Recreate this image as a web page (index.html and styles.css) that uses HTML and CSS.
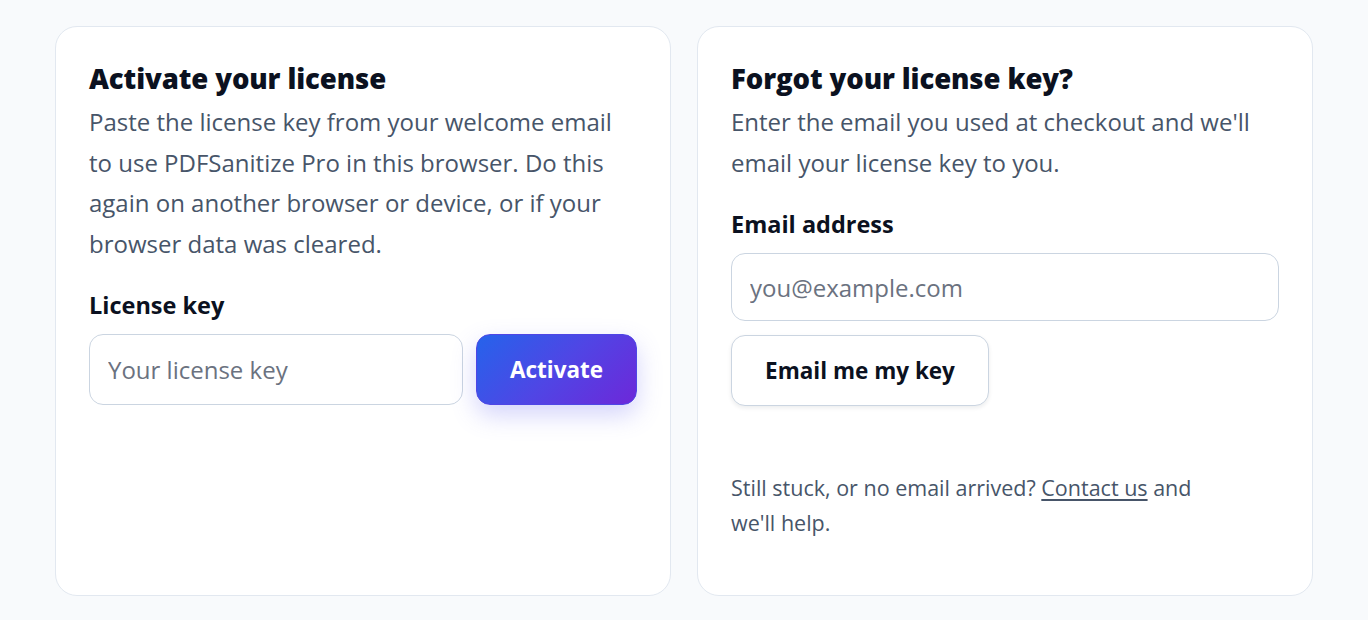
FILE: index.html
```html
<!DOCTYPE html>
<html lang="en">
<head>
<meta charset="utf-8">
<title>License</title>
<link rel="stylesheet" href="styles.css">
</head>
<body>
<main class="page">
  <section class="card">
    <h2 class="card-title">Activate your license</h2>
    <p class="card-text">Paste the license key from your welcome email to use PDFSanitize Pro in this browser. Do this again on another browser or device, or if your browser data was cleared.</p>
    <label class="field-label" for="key">License key</label>
    <div class="row row-key">
      <input id="key" class="input input-key" type="text" placeholder="Your license key">
      <button class="btn btn-primary" type="button">Activate</button>
    </div>
  </section>
  <section class="card">
    <h2 class="card-title">Forgot your license key?</h2>
    <p class="card-text">Enter the email you used at checkout and we'll email your license key to you.</p>
    <label class="field-label" for="email">Email address</label>
    <input id="email" class="input input-email" type="email" placeholder="you@example.com">
    <div class="row row-send">
      <button class="btn btn-secondary" type="button">Email me my key</button>
    </div>
    <p class="help">Still stuck, or no email arrived? <a href="#" class="help-link">Contact us</a> and we'll help.</p>
  </section>
</main>
</body>
</html>
```

FILE: styles.css
```css
* { box-sizing: border-box; }
html, body { margin: 0; padding: 0; }
body {
  background: #f8fafc;
  font-family: "Open Sans", "Noto Sans", sans-serif;
  color: #0f172a;
}
.page {
  display: grid;
  grid-template-columns: 616px 616px;
  gap: 26px;
  padding: 26px 55px 0;
}
.card {
  background: #ffffff;
  border: 1px solid #e2e8f0;
  border-radius: 22px;
  height: 570px;
  padding: 33px 33px;
  display: flex;
  flex-direction: column;
  align-items: flex-start;
}
.card-title {
  margin: 0;
  font-size: 27.5px;
  font-weight: 800;
  line-height: 38px;
  letter-spacing: -0.1px;
  color: #0b1120;
}
.card-text {
  margin: 4px 0 0;
  font-size: 24px;
  line-height: 40.5px;
  color: #475569;
}
.field-label {
  margin-top: 25px;
  font-size: 23.5px;
  font-weight: 700;
  line-height: 32px;
  color: #0b1120;
}
.row {
  display: flex;
  gap: 13px;
}
.row-key { margin-top: 13px; }
.row-send { margin-top: 14px; }
.input {
  font-family: inherit;
  font-size: 24px;
  color: #0f172a;
  background: #ffffff;
  border: 1px solid #cbd5e1;
  border-radius: 14px;
  padding: 0 18px;
  outline: none;
}
.input::placeholder { color: #6b7280; }
.input-key { width: 374px; height: 71px; }
.input-email { width: 548px; height: 68px; margin-top: 13px; }
.btn {
  font-family: inherit;
  font-size: 22.5px;
  font-weight: 700;
  border-radius: 14px;
  cursor: pointer;
  padding: 0;
}
.btn-primary {
  width: 161px;
  height: 71px;
  color: #ffffff;
  border: 1px solid #4f46e5;
  background: linear-gradient(135deg, #2563eb 0%, #4f46e5 50%, #6d28d9 100%);
  box-shadow: 0 10px 24px rgba(99, 102, 241, 0.28);
}
.btn-secondary {
  width: 258px;
  height: 71px;
  color: #0b1120;
  background: #ffffff;
  border: 1px solid #cbd5e1;
  box-shadow: 0 2px 4px rgba(15, 23, 42, 0.08);
}
.help {
  margin: auto 0 22px;
  max-width: 480px;
  font-size: 21.5px;
  line-height: 35px;
  color: #475569;
}
.help-link { color: #475569; text-decoration: underline; text-underline-offset: 3px; }
```
